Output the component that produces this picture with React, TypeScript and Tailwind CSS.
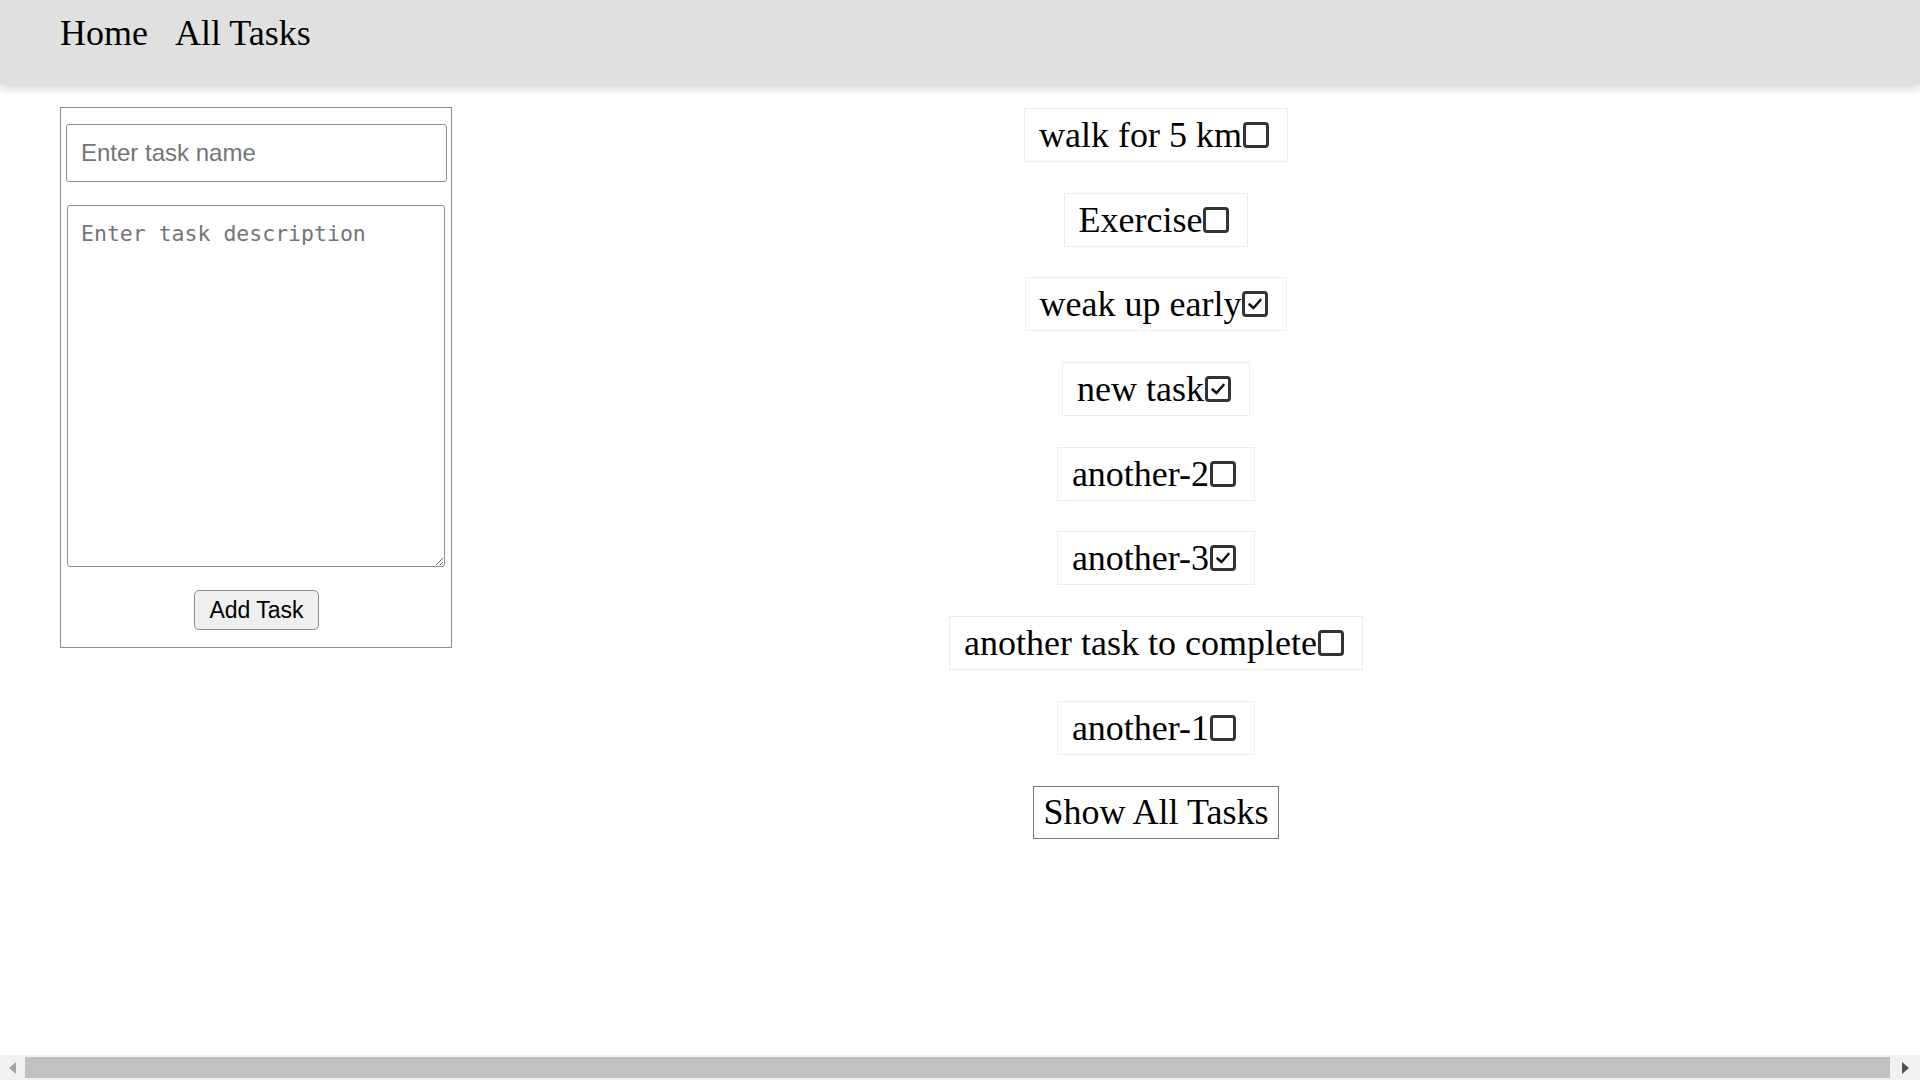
import { useState } from 'react'

type Task = { name: string; done: boolean }

const initialTasks: Task[] = [
  { name: 'walk for 5 km', done: false },
  { name: 'Exercise', done: false },
  { name: 'weak up early', done: true },
  { name: 'new task', done: true },
  { name: 'another-2', done: false },
  { name: 'another-3', done: true },
  { name: 'another task to complete', done: false },
  { name: 'another-1', done: false },
]

function Checkbox({ checked, onClick }: { checked: boolean; onClick: () => void }) {
  return (
    <span
      onClick={onClick}
      className="ml-[1px] mr-[3px] flex h-[26px] w-[26px] shrink-0 cursor-pointer items-center justify-center rounded-[4px] border-[3px] border-[#333] bg-white"
    >
      {checked && (
        <svg width="16" height="16" viewBox="0 0 16 16">
          <polyline points="2.5,8.5 6.5,12 13.5,4" fill="none" stroke="#111" strokeWidth="2.6" strokeLinecap="round" strokeLinejoin="round" />
        </svg>
      )}
    </span>
  )
}

function Scrollbar() {
  return (
    <div className="flex h-[25px] shrink-0 items-center bg-[#f1f1f1]">
      <div className="flex w-[25px] items-center justify-center">
        <svg width="8" height="12" viewBox="0 0 8 12">
          <polygon points="7,0 0,6 7,12" fill="#a3a3a3" />
        </svg>
      </div>
      <div className="h-[21px] flex-1 bg-[#c1c1c1]" />
      <div className="flex w-[30px] items-center justify-center">
        <svg width="8" height="12" viewBox="0 0 8 12">
          <polygon points="1,0 8,6 1,12" fill="#505050" />
        </svg>
      </div>
    </div>
  )
}

export default function App() {
  const [tasks, setTasks] = useState(initialTasks)

  const toggle = (i: number) => {
    setTasks(tasks.map((t, idx) => (idx === i ? { ...t, done: !t.done } : t)))
  }

  return (
    <div className="flex h-screen flex-col overflow-hidden bg-white text-black">
      <nav className="relative z-10 flex h-[84px] shrink-0 items-start gap-[27px] bg-[#e0e0e0] pl-[60px] pt-[13px] shadow-[0_4px_10px_rgba(0,0,0,0.18)] font-['Liberation_Serif',serif] text-[36px] leading-[41px]">
        <a href="#" className="text-black">Home</a>
        <a href="#" className="text-black">All Tasks</a>
      </nav>

      <main className="flex flex-1 items-start">
        <form
          onSubmit={(e) => e.preventDefault()}
          className="ml-[60px] mt-[23px] flex w-[392px] shrink-0 flex-col border border-[#8a8a8a] pb-[17px] pl-[5px] pt-[16px]"
        >
          <input
            type="text"
            placeholder="Enter task name"
            className="h-[58px] w-[381px] rounded-[3px] border border-[#8f8f8f] px-[14px] font-['Liberation_Sans',sans-serif] text-[24px] placeholder:text-[#757575] outline-none"
          />
          <textarea
            placeholder="Enter task description"
            className="ml-[1px] mt-[23px] h-[362px] w-[378px] rounded-[3px] border border-[#8f8f8f] px-[13px] py-[14px] font-['DejaVu_Sans_Mono',monospace] text-[21.5px] leading-[28px] placeholder:text-[#757575] outline-none"
          />
          <button
            type="submit"
            className="mt-[23px] ml-[128px] h-[40px] w-[125px] rounded-[5px] border border-[#8f8f8f] bg-[#efefef] font-['Liberation_Sans',sans-serif] text-[23px] leading-[38px]"
          >
            Add Task
          </button>
        </form>

        <div className="flex flex-1 flex-col items-center gap-[30.7px] pr-[60px] pt-[24px] font-['Liberation_Serif',serif] text-[36px]">
          {tasks.map((t, i) => (
            <div key={t.name} className="flex h-[54px] items-center border border-[#ececec] pl-[14px] pr-[15px] leading-[40px]">
              <span>{t.name}</span>
              <Checkbox checked={t.done} onClick={() => toggle(i)} />
            </div>
          ))}
          <button className="h-[53px] border border-[#767676] bg-white px-[10px] font-['Liberation_Serif',serif] text-[36px] leading-[40px]">
            Show All Tasks
          </button>
        </div>
      </main>

      <Scrollbar />
    </div>
  )
}
